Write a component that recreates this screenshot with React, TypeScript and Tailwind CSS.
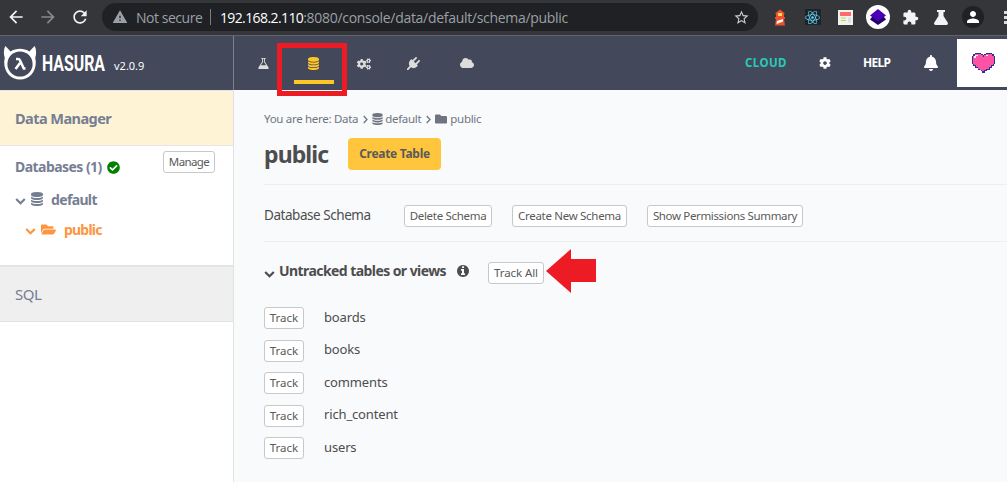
import React from "react";
import { FaCogs, FaCloud, FaCog, FaBell, FaCheckCircle, FaFolder, FaFolderOpen, FaReact } from "react-icons/fa";
import { MdArrowBack, MdArrowForward, MdRefresh, MdWarning, MdStarBorder, MdPerson, MdExtension } from "react-icons/md";

const glyphs = {
  chevron: "M1683 808l-742 741q-19 19-45 19t-45-19l-742-741q-19-19-19-45.500t19-45.500l166-165q19-19 45-19t45 19l531 531 531-531q19-19 45-19t45 19l166 165q19 19 19 45.500t-19 45.500z",
  plug: "M1755 453q37 38 37 90.500t-37 90.500l-401 400 150 150-160 160q-163 163-389.500 186.500t-411.500-100.500l-362 362h-181v-181l362-362q-124-185-100.500-411.500t186.500-389.500l160-160 150 150 400-401q38-37 91-37t90 37 37 90.500-37 90.500l-400 401 234 234 401-400q38-37 91-37t90 37z",
  flask: "M1591 1448q56 89 21.500 152.500t-140.500 63.500h-1152q-106 0-140.500-63.500t21.500-152.500l503-793v-399h-64q-26 0-45-19t-19-45 19-45 45-19h512q26 0 45 19t19 45-19 45-45 19h-64v399zm-779-725l-272 429h712l-272-429-20-31v-436h-128v436z",
  info: "M1152 1376v-160q0-14-9-23t-23-9h-96v-512q0-14-9-23t-23-9h-320q-14 0-23 9t-9 23v160q0 14 9 23t23 9h96v320h-96q-14 0-23 9t-9 23v160q0 14 9 23t23 9h448q14 0 23-9t9-23zm-128-896v-160q0-14-9-23t-23-9h-192q-14 0-23 9t-9 23v160q0 14 9 23t23 9h192q14 0 23-9t9-23zm640 416q0 209-103 385.500t-279.500 279.500-385.500 103-385.500-103-279.500-279.500-103-385.500 103-385.500 279.500-279.500 385.500-103 385.500 103 279.500 279.500 103 385.500z",
};

function Glyph({ name, className }: { name: keyof typeof glyphs; className: string }) {
  return (
    <svg viewBox="0 0 1792 1792" fill="currentColor" className={`shrink-0 ${className}`}>
      <path d={glyphs[name]} />
    </svg>
  );
}

function DatabaseIcon({ className }: { className: string }) {
  return (
    <svg viewBox="0 0 1536 1792" fill="currentColor" className={className}>
      <path d="M768 768q237 0 443-43t325-127v170q0 69-103 128t-280 93.500-385 34.500-385-34.500-280-93.500-103-128v-170q119 84 325 127t443 43zm0 768q237 0 443-43t325-127v170q0 69-103 128t-280 93.500-385 34.500-385-34.500-280-93.500-103-128v-170q119 84 325 127t443 43zm0-384q237 0 443-43t325-127v170q0 69-103 128t-280 93.500-385 34.500-385-34.500-280-93.500-103-128v-170q119 84 325 127t443 43zm0-1152q208 0 385 34.500t280 93.500 103 128v128q0 69-103 128t-280 93.500-385 34.500-385-34.500-280-93.500-103-128v-128q0-69 103-128t280-93.500 385-34.500z" />
    </svg>
  );
}

function CrumbSeparator() {
  return (
    <svg viewBox="0 0 5 9" className="ml-[5px] mr-1 mt-px h-[9px] w-[5px]">
      <path d="m.7 1 3.300 3.500L.7 8" fill="none" stroke="currentColor" strokeWidth="1.300" />
    </svg>
  );
}

function HasuraMark() {
  return (
    <svg viewBox="0 0 34 36" className="h-9 w-[34px] shrink-0">
      <path d="M2.200 1 C3.500 2 6 4.500 7.500 6.500 C13 2.700 21 2.700 26.500 6.500 C28 4.500 30.500 2 31.800 1 C33.500 5 33.500 9 32.200 13 C35 24 27.500 34.600 17 34.600 C6.500 34.600 -1 24 1.800 13 C.5 9 .5 5 2.200 1 Z" fill="#fff" />
      <circle cx="17" cy="19" r="12.600" fill="#43495a" />
      <path d="M13 14h2.300q1 0 1.500 1l4 8.500h1.700M17 18l-4.500 6" fill="none" stroke="#fff" strokeWidth="2.500" />
    </svg>
  );
}

function Lighthouse() {
  return (
    <svg viewBox="0 0 14 17" className="h-[17px] w-3.5">
      <path d="M2.500 4 7 .5 11.500 4v1H11v3h1v2h-1l1 6.500H2L3 10H2V8h1V5h-.5z" fill="#f0502d" />
      <path d="M5 4h4v3H5z" fill="#ffd75e" />
      <path d="m4 12 6-2v2.500L3.500 15z" fill="#fff" />
    </svg>
  );
}

function NewsIcon() {
  return (
    <svg viewBox="0 0 15 15" className="size-[15px]">
      <path d="M0 0h15v15H0z" fill="#f3f1ef" />
      <path d="M2 2h11v4H2z" fill="#ff6b6b" />
      <path d="M3 8h5M3 10.500h5" stroke="#a4e34a" />
      <path d="M10 7.500h3v5h-3z" fill="#ddd" />
    </svg>
  );
}

function LayersIcon() {
  return (
    <svg viewBox="0 0 24 24" className="size-6">
      <circle cx="12" cy="12" r="12" fill="#fff" />
      <path d="m6 12-2 2.500L12 20l8-5.500-2-2.500z" fill="#240070" />
      <path d="m12 4 8 6.500-8 5.500-8-5.500z" fill="#4b00b8" />
    </svg>
  );
}

function Beaker() {
  return (
    <svg viewBox="0 0 14 15" className="h-[15px] w-3.5" fill="#f1f3f4">
      <path d="M3 0h8v2H9.500v4L14 13q0 2-1.500 2h-11Q0 15 0 13l4.500-7V2H3z" />
    </svg>
  );
}

function Heart() {
  return (
    <svg viewBox="0 0 23 20" shapeRendering="crispEdges" className="h-5 w-[23px]">
      <path d="M3 0h6v1h2v1h1V1h2V0h6v1h2v2h1v8h-1v2h-2v2h-2v2h-3v1h-2v2h-3v-2H9v-1H6v-2H3v-2H1v-2H0V3h1V1h2z" fill="#24349c" />
      <path d="M3 1h6v1h2v2h1V2h2V1h6v2h2v8h-1v1h-2v2h-2v2h-3v1h-2v1h-2v-1H8v-1H6v-2H4v-2H2v-1H1V3h2z" fill="#ff52a2" />
      <path d="M3 2h3v1H4v2H2V3h1zM14 2h2v1h-2z" fill="#fff" />
    </svg>
  );
}

function SmallButton({ children, className }: { children: React.ReactNode; className: string }) {
  return (
    <button className={`flex h-[22px] shrink-0 items-center justify-center whitespace-nowrap rounded-[3px] border border-[#c6c8ca] bg-white text-[11.5px] text-[#5a5a5a] ${className}`}>
      {children}
    </button>
  );
}

function BrowserBar() {
  return (
    <div className="flex h-9 items-center border-b border-[#606367] bg-[#35363a] pb-px">
      <MdArrowBack className="ml-1.5 size-5 text-[#f1f3f4]" />
      <MdArrowForward className="ml-3 size-5 text-[#86888a]" />
      <MdRefresh className="ml-3 size-5 text-[#f1f3f4]" />
      <div className="ml-3 flex h-7 w-[657px] items-center whitespace-nowrap rounded-full bg-[#202124] font-['Open_Sans',sans-serif] text-[14px]">
        <MdWarning className="ml-2.5 size-4 text-[#9aa0a6]" />
        <span className="ml-2 w-[74px] tracking-[-0.45px] text-[#9aa0a6]">Not secure</span>
        <span className="h-4 w-px bg-[#7b7d80]" />
        <span className="ml-[9px] tracking-[-0.6px] text-white">192.168.2.110</span>
        <span className="tracking-[-0.3px] text-[#9aa0a6]">:8080/console/data/default/schema/public</span>
        <MdStarBorder className="ml-auto mr-[8px] size-[17px] text-[#c8cacd]" />
      </div>
      <div className="ml-[15px] flex items-center">
        <Lighthouse />
        <span className="ml-[18px] flex size-4 items-center justify-center bg-[#20232a]"><FaReact className="size-[15px] text-[#61dafb]" /></span>
        <span className="ml-[17px]"><NewsIcon /></span>
        <span className="ml-[13px]"><LayersIcon /></span>
        <MdExtension className="ml-3 size-[17px] text-[#f1f3f4]" />
        <span className="ml-[15px]"><Beaker /></span>
        <span className="ml-3.5 flex size-[22px] items-center justify-center rounded-full bg-[#202124]"><MdPerson className="size-[18px] text-white" /></span>
        <span className="ml-5 flex flex-col gap-0.5">
          <i className="size-[3px] bg-[#ddd]" /><i className="size-[3px] bg-[#ddd]" /><i className="size-[3px] bg-[#ddd]" />
        </span>
      </div>
    </div>
  );
}

function Header() {
  return (
    <header className="flex h-[54px] text-white">
      <div className="flex w-[234px] border-r border-[#7c8191] pl-[3px] pt-[9px]">
        <HasuraMark />
        <span className="ml-[5px] mt-[2px] h-[34px] w-[62px] origin-left scale-x-[0.72] whitespace-nowrap font-['Roboto',sans-serif] text-[22px] font-bold leading-[34px]">HASURA</span>
        <span className="ml-[10px] mt-3 text-[11px] leading-[17px]">v2.0.9</span>
      </div>
      <nav className="flex pl-[9px] text-[#ddd]">
        <span className="flex w-10 justify-center pt-[21px]"><Glyph name="flask" className="size-[13px]" /></span>
        <span className="relative ml-2.5 flex w-10 justify-center pt-[21px] text-[#ffc627]">
          <DatabaseIcon className="h-[13px] w-[11px]" />
          <span className="absolute left-px top-11 h-1 w-10 bg-[#ffc627]" />
          <span className="absolute -left-4 top-[7px] h-[53px] w-[70px] border-[5px] border-[#ed1c24]" />
        </span>
        <span className="ml-[11px] flex w-10 justify-center pt-[21px]"><FaCogs className="size-3.5" /></span>
        <span className="ml-[9px] flex w-10 justify-center pt-[21px]"><Glyph name="plug" className="size-[13px]" /></span>
        <span className="ml-3.5 flex w-10 justify-center pt-5"><FaCloud className="size-3.5" /></span>
      </nav>
      <div className="ml-auto flex items-center">
        <span className="w-[74px] text-[11.5px] font-bold tracking-[0.4px] text-[#27cbbb]">CLOUD</span>
        <FaCog className="size-3" />
        <span className="ml-8 w-[60px] text-[12px] font-bold tracking-[-0.7px]">HELP</span>
        <FaBell className="size-4" />
        <span className="ml-[18px] flex h-12 w-[50px] items-center bg-white pl-[15px]"><Heart /></span>
      </div>
    </header>
  );
}

function Sidebar() {
  return (
    <aside className="w-[234px] shrink-0 border-r border-[#e1e2e4] bg-white font-bold text-[#767e93]">
      <div className="flex h-14 items-center border-y border-[#e5e5e5] bg-[#fff3d5] pl-[15px] pt-px text-[14.5px] tracking-[-0.55px]">Data Manager</div>
      <div className="h-[119px] pl-[15px]">
        <div className="flex h-11 items-start text-[14px]">
          <span className="mt-[11px] w-[92px] whitespace-nowrap leading-5 tracking-[-0.55px]">Databases (1)</span>
          <FaCheckCircle className="mt-[15px] size-[13px] text-[#008000]" />
          <SmallButton className="ml-[43px] mt-[5px] w-[52px] font-normal tracking-[-0.6px]">Manage</SmallButton>
        </div>
        <div className="-mt-px flex h-5 items-center text-[14px]">
          <Glyph name="chevron" className="mt-0.5 size-[11px]" />
          <DatabaseIcon className="ml-[5px] h-3.5 w-3" />
          <span className="ml-2 tracking-[-0.65px]">default</span>
        </div>
        <div className="mt-2.5 flex h-5 items-center pl-2.5 text-[14px] text-[#fd9540]">
          <Glyph name="chevron" className="mt-0.5 size-[11px]" />
          <FaFolderOpen className="ml-[5px] size-[15px]" />
          <span className="ml-2 tracking-[-0.8px]">public</span>
        </div>
      </div>
      <div className="flex h-[57px] items-center border-b border-t-2 border-[#e3e3e3] bg-[#efefef] pl-[15px] text-[15px] font-normal tracking-[-0.5px]">SQL</div>
    </aside>
  );
}

const tables = ["boards", "books", "comments", "rich_content", "users"];

function Main() {
  return (
    <main className="min-w-0 flex-1 bg-[#f9fafc] pl-[30px] text-[#4d4d4d]">
      <div className="mt-5 flex h-[18px] items-center whitespace-nowrap text-[11.5px] tracking-[-0.3px] text-[#6f7580]">
        <span className="w-[70px]">You are here:</span><span>Data</span>
        <CrumbSeparator />
        <DatabaseIcon className="mr-0.5 h-3 w-[11px]" /><span>default</span>
        <CrumbSeparator />
        <FaFolder className="mr-[3px] size-3" /><span>public</span>
      </div>
      <div className="mt-2.5 flex h-8 items-center">
        <h1 className="w-[84px] text-[23px] font-bold leading-8 tracking-[-0.9px]">public</h1>
        <button className="h-8 w-[93px] rounded-[4px] bg-[#ffc53d] text-[12px] font-bold tracking-[-0.3px] text-[#5a5a5a]">Create Table</button>
      </div>
      <div className="mt-3.5 flex h-[58px] items-center border-y border-[#eceeef] pt-1.5">
        <span className="-mt-0.5 w-[140px] text-[13.5px] tracking-[-0.45px]">Database Schema</span>
        <SmallButton className="w-[88px] tracking-[-0.3px]">Delete Schema</SmallButton>
        <SmallButton className="ml-5 w-[115px] tracking-[-0.3px]">Create New Schema</SmallButton>
        <SmallButton className="ml-5 w-[156px] tracking-[-0.35px]">Show Permissions Summary</SmallButton>
      </div>
      <div className="relative mt-5 flex h-[22px] items-center">
        <Glyph name="chevron" className="size-[11px]" />
        <span className="-mt-1.5 ml-1 w-[177px] whitespace-nowrap text-[14px] font-bold tracking-[-0.57px]">Untracked tables or views</span>
        <Glyph name="info" className="-mt-1 size-3.5" />
        <SmallButton className="ml-[18px] w-14 tracking-[-0.1px]">Track All</SmallButton>
        <svg viewBox="0 0 50 44" className="absolute left-[282px] top-[-13px] h-11 w-[50px]">
          <path d="M0 22 25 0v10h25v23H25v11z" fill="#ed1c24" />
        </svg>
      </div>
      <div className="mt-[23px] flex flex-col gap-[10.500px]">
        {tables.map((name) => (
          <div key={name} className="flex h-[22px] items-center">
            <SmallButton className="w-10">Track</SmallButton>
            <span className="-mt-px ml-5 text-[13px] tracking-[-0.15px]">{name}</span>
          </div>
        ))}
      </div>
    </main>
  );
}

export default function App() {
  return (
    <div className="flex h-[482px] w-[1007px] flex-col overflow-hidden bg-[#43495a] font-['Noto_Sans',sans-serif]">
      <BrowserBar />
      <Header />
      <div className="flex flex-1">
        <Sidebar />
        <Main />
      </div>
    </div>
  );
}
